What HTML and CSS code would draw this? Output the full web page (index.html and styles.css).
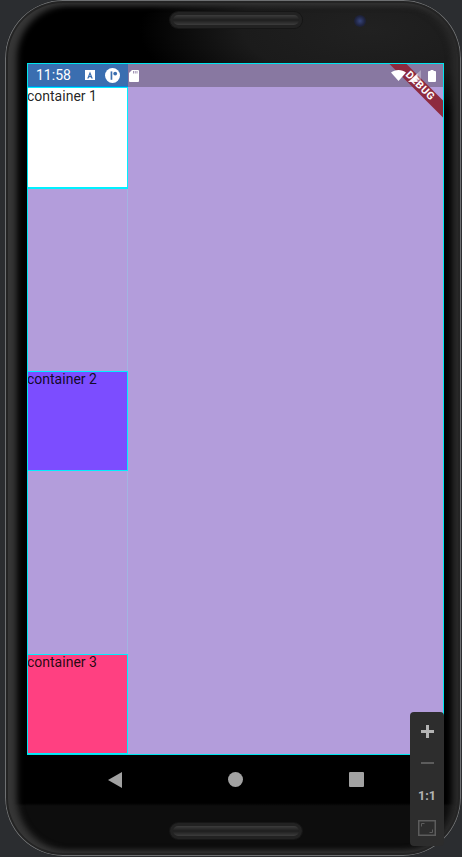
FILE: index.html
```html
<!DOCTYPE html>
<html lang="en">
<head>
  <meta charset="UTF-8" />
  <title>Flutter layout demo</title>
  <link rel="stylesheet" href="styles.css">
</head>
<body>

<div class="phone">
  <div class="bezel-top">
    <div class="speaker"></div>
    <div class="camera"></div>
  </div>

  <div class="screen">
    <div class="status-bar">
      <div class="status-left">
        <span class="clock">11:58</span>
        <svg class="icon-a" width="10" height="10" viewBox="0 0 10 10">
          <path fill="#fff" d="M0 0h10v10H0z"/>
          <path fill="#3a6eb0" d="M5 1.500 7.800 8.500H6.400l-.5-1.300H4.100l-.5 1.300H2.200zM4.500 6.100h1L5 4.400z"/>
        </svg>
        <svg class="icon-p" width="15" height="15" viewBox="0 0 15 15">
          <circle cx="7.500" cy="7.500" r="7.500" fill="#fff"/>
          <path fill="#3a6eb0" d="M5.600 3.400h1.700v8.400H5.600z"/>
          <circle cx="10.200" cy="5.600" r="1.900" fill="#3a6eb0"/>
        </svg>
      </div>
      <svg class="icon-sd" width="10" height="12" viewBox="0 0 10 12">
        <path fill="#fff" d="M3 0h6a1 1 0 0 1 1 1v10a1 1 0 0 1-1 1H1a1 1 0 0 1-1-1V3z"/>
        <path fill="#8878a1" d="M4 1h.8v2.400H4zM5.800 1h.8v2.400h-.8zM7.600 1h.8v2.400h-.8z"/>
      </svg>
      <div class="status-right">
        <svg width="15" height="11" viewBox="0 0 15 11">
          <path fill="#fff" d="M7.500 11 0 2.600C2 .9 4.600 0 7.500 0S13 .9 15 2.600z"/>
        </svg>
        <svg class="icon-signal" width="13" height="12" viewBox="0 0 13 12">
          <path fill="#fff" fill-opacity="0.35" d="M13 0v12H0z"/>
          <path fill="#fff" d="M9.500 3.500V12H0z"/>
        </svg>
        <svg class="icon-battery" width="8" height="12" viewBox="0 0 8 12">
          <path fill="#fff" d="M2.500 0h3v1H7a1 1 0 0 1 1 1v9a1 1 0 0 1-1 1H1a1 1 0 0 1-1-1V2a1 1 0 0 1 1-1h1.500z"/>
        </svg>
      </div>
    </div>

    <div class="app-body">
      <div class="column">
        <div class="box box-white">container 1</div>
        <div class="box box-purple">container 2</div>
        <div class="box box-pink">container 3</div>
      </div>
    </div>

    <div class="debug-banner">DEBUG</div>
  </div>

  <div class="nav-bar">
    <svg width="14" height="16" viewBox="0 0 14 16"><path fill="#a2a2a2" d="M14 0v16L0 8z"/></svg>
    <div class="nav-home"></div>
    <div class="nav-square"></div>
  </div>

  <div class="bezel-bottom">
    <div class="speaker"></div>
  </div>

  <div class="zoom-bar">
    <svg class="zoom-plus" width="15" height="15" viewBox="0 0 15 15"><path fill="#b4b4b4" d="M6 1h3v5h5v3H9v5H6V9H1V6h5z"/></svg>
    <div class="zoom-minus"></div>
    <span class="zoom-ratio">1:1</span>
    <svg class="zoom-fit" width="18" height="16" viewBox="0 0 18 16">
      <path fill="none" stroke="#5c5c5c" stroke-width="1.500" d="M.75.75h16.500v14.500H.75z"/>
      <path fill="none" stroke="#5c5c5c" d="M3.500 6.500v-3h3M14.500 9.500v3h-3"/>
    </svg>
  </div>
</div>

</body>
</html>
```

FILE: styles.css
```css
html, body {
  margin: 0;
  height: 100%;
}

body {
  width: 462px;
  height: 857px;
  overflow: hidden;
  background: #2b2d30;
  font-family: Roboto, 'Liberation Sans', sans-serif;
}

.phone {
  position: relative;
  box-sizing: border-box;
  width: 456px;
  height: 856px;
  margin-left: 5px;
  padding: 0 17px 0 22px;
  display: flex;
  flex-direction: column;
  border-radius: 58px;
  background:
    radial-gradient(ellipse 230px 90px at 80% 30px, #212121 0%, #1b1b1b 55%, rgba(0, 0, 0, 0) 100%),
    linear-gradient(to bottom, #000 803px, #0d0d0d 806px);
  box-shadow:
    inset 0 0 0 1px #6e7072,
    inset 0 0 0 3px #242424,
    inset 7px 0 6px 5px #363636,
    inset -5px 0 6px 4px #2a2a2a;
}

.bezel-top {
  position: relative;
  height: 63px;
  flex: none;
  display: flex;
  justify-content: center;
  align-items: flex-start;
  padding-top: 12px;
  box-sizing: border-box;
}

.speaker {
  width: 132px;
  height: 16px;
  box-sizing: border-box;
  border-radius: 8px;
  background: linear-gradient(to bottom, #3c3c3c, #1e1e1e 50%, #3c3c3c);
  border: 3px solid #222;
  box-shadow: 0 0 0 1px #161616;
}

.camera {
  position: absolute;
  top: 15px;
  left: 327px;
  width: 12px;
  height: 12px;
  border-radius: 50%;
  background: radial-gradient(circle, #36447a 0%, #1f2440 55%, #1a1a1a 100%);
}

.screen {
  position: relative;
  height: 692px;
  flex: none;
  box-sizing: border-box;
  border: 1px solid #00e5ee;
  display: flex;
  flex-direction: column;
  overflow: hidden;
  background: #b39ddb;
}

.status-bar {
  height: 23px;
  flex: none;
  display: flex;
  align-items: center;
  background: #8878a1;
  color: #fff;
}

.status-left {
  box-sizing: border-box;
  width: 100px;
  height: 100%;
  display: flex;
  align-items: center;
  padding-left: 8px;
  border-bottom: 1px solid #0a84e0;
  background: #3a6eb0;
}

.clock {
  font-size: 14px;
  width: 49px;
}

.icon-p {
  margin-left: 10px;
}

.icon-sd {
  margin-left: 1px;
}

.status-right {
  position: relative;
  z-index: 2;
  margin-left: auto;
  margin-right: 7px;
  display: flex;
  align-items: center;
}

.icon-signal {
  margin-left: 2px;
  opacity: 0.88;
}

.icon-battery {
  margin-left: 7px;
}

.app-body {
  flex: 1;
  display: flex;
}

.column {
  width: 99px;
  display: flex;
  flex-direction: column;
  border-right: 1px solid #a3b4e2;
}

.box {
  box-sizing: border-box;
  width: 100px;
  height: 100px;
  border-top: 1px solid #00f0ff;
  border-bottom: 1px solid #00f0ff;
  border-right: 1px solid #00f0ff;
  color: rgba(0, 0, 0, 0.87);
  font-size: 14px;
  line-height: 14px;
  text-indent: -1px;
}

.box-white {
  height: 102px;
  border-bottom-width: 2px;
  line-height: 16px;
  background: #fff;
}

.box-purple {
  margin-top: 182px;
  background: #7c4dff;
}

.box-pink {
  margin-top: auto;
  background: #ff4081;
}

.debug-banner {
  position: absolute;
  top: 16px;
  left: 352px;
  width: 80px;
  height: 12px;
  background: #8e2a3f;
  color: #fff;
  font-size: 10.500px;
  font-weight: 700;
  line-height: 12px;
  text-align: center;
  letter-spacing: 0.6px;
  transform: rotate(45deg);
}

.nav-bar {
  height: 49px;
  flex: none;
  display: flex;
  align-items: center;
  justify-content: center;
  gap: 106px;
}

.nav-home {
  width: 15px;
  height: 15px;
  border-radius: 50%;
  background: #a2a2a2;
}

.nav-square {
  width: 15px;
  height: 15px;
  border-radius: 1px;
  background: #a2a2a2;
}

.bezel-bottom {
  flex: 1;
  display: flex;
  justify-content: center;
  padding-top: 19px;
}

.zoom-bar {
  position: absolute;
  top: 712px;
  left: 405px;
  box-sizing: border-box;
  width: 34px;
  height: 134px;
  padding-top: 12px;
  display: flex;
  flex-direction: column;
  align-items: center;
  border-radius: 4px;
  background: #2d2d2d;
}

.zoom-plus,
.zoom-fit {
  flex: none;
}

.zoom-minus {
  flex: none;
  width: 13px;
  height: 2px;
  margin-top: 23px;
  background: #5c5c5c;
}

.zoom-ratio {
  margin-top: 25px;
  color: #b4b4b4;
  font-size: 12.500px;
  font-weight: 700;
  line-height: 14px;
}

.zoom-fit {
  margin-top: 17px;
}
```
